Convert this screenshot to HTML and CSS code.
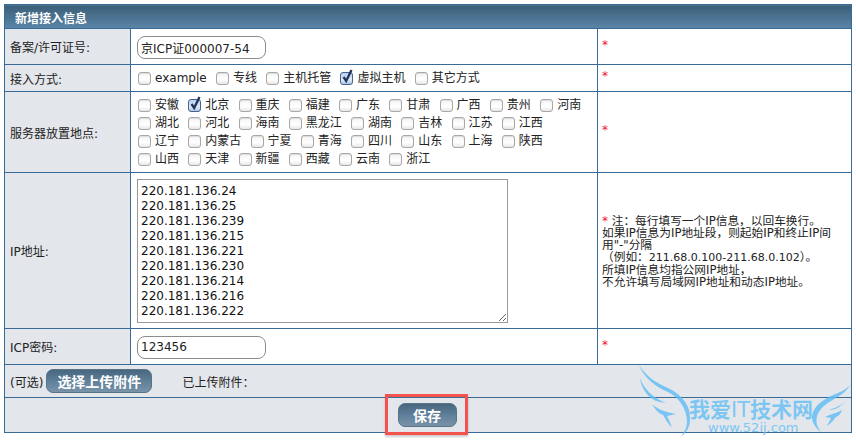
FILE: index.html
```html
<!DOCTYPE html>
<html lang="zh-CN">
<head>
<meta charset="utf-8">
<title>新增接入信息</title>
<link rel="stylesheet" href="styles.css">
</head>
<body>
<div class="page">
<table class="form">
  <colgroup><col class="c1"><col class="c2"><col class="c3"></colgroup>
  <tr class="r-head"><th colspan="3">新增接入信息</th></tr>
  <tr class="r-icp">
    <td class="label">备案/许可证号:</td>
    <td class="field"><input class="text" type="text" value="京ICP证000007-54"></td>
    <td class="note"><span class="req">*</span></td>
  </tr>
  <tr class="r-way">
    <td class="label">接入方式:</td>
    <td class="field"><div class="checks">
      <label class="ck"><input type="checkbox">example</label>
      <label class="ck"><input type="checkbox">专线</label>
      <label class="ck"><input type="checkbox">主机托管</label>
      <label class="ck"><input type="checkbox" checked>虚拟主机</label>
      <label class="ck"><input type="checkbox">其它方式</label>
    </div></td>
    <td class="note"><span class="req">*</span></td>
  </tr>
  <tr class="r-place">
    <td class="label">服务器放置地点:</td>
    <td class="field"><div class="checks">
      <label class="ck"><input type="checkbox">安徽</label>
      <label class="ck"><input type="checkbox" checked>北京</label>
      <label class="ck"><input type="checkbox">重庆</label>
      <label class="ck"><input type="checkbox">福建</label>
      <label class="ck"><input type="checkbox">广东</label>
      <label class="ck"><input type="checkbox">甘肃</label>
      <label class="ck"><input type="checkbox">广西</label>
      <label class="ck"><input type="checkbox">贵州</label>
      <label class="ck"><input type="checkbox">河南</label>
      <label class="ck"><input type="checkbox">湖北</label>
      <label class="ck"><input type="checkbox">河北</label>
      <label class="ck"><input type="checkbox">海南</label>
      <label class="ck"><input type="checkbox">黑龙江</label>
      <label class="ck"><input type="checkbox">湖南</label>
      <label class="ck"><input type="checkbox">吉林</label>
      <label class="ck"><input type="checkbox">江苏</label>
      <label class="ck"><input type="checkbox">江西</label>
      <label class="ck"><input type="checkbox">辽宁</label>
      <label class="ck"><input type="checkbox">内蒙古</label>
      <label class="ck"><input type="checkbox">宁夏</label>
      <label class="ck"><input type="checkbox">青海</label>
      <label class="ck"><input type="checkbox">四川</label>
      <label class="ck"><input type="checkbox">山东</label>
      <label class="ck"><input type="checkbox">上海</label>
      <label class="ck"><input type="checkbox">陕西</label>
      <label class="ck"><input type="checkbox">山西</label>
      <label class="ck"><input type="checkbox">天津</label>
      <label class="ck"><input type="checkbox">新疆</label>
      <label class="ck"><input type="checkbox">西藏</label>
      <label class="ck"><input type="checkbox">云南</label>
      <label class="ck"><input type="checkbox">浙江</label>
    </div></td>
    <td class="note"><span class="req">*</span></td>
  </tr>
  <tr class="r-ip">
    <td class="label">IP地址:</td>
    <td class="field"><textarea class="area">220.181.136.24
220.181.136.25
220.181.136.239
220.181.136.215
220.181.136.221
220.181.136.230
220.181.136.214
220.181.136.216
220.181.136.222</textarea></td>
    <td class="note small"><span class="req">*</span> 注：每行填写一个IP信息，以回车换行。<br>如果IP信息为IP地址段，则起始IP和终止IP间用"-"分隔<br>（例如：<span class="num">211.68.0.100-211.68.0.102</span>）。<br>所填IP信息均指公网IP地址，<br>不允许填写局域网IP地址和动态IP地址。</td>
  </tr>
  <tr class="r-pwd">
    <td class="label">ICP密码:</td>
    <td class="field"><input class="text" type="text" value="123456"></td>
    <td class="note"><span class="req">*</span></td>
  </tr>
  <tr class="r-upload">
    <td colspan="3" class="label"><div class="upload"><span>(可选)</span><button class="btn wide" type="button">选择上传附件</button><span class="done">已上传附件：</span></div></td>
  </tr>
  <tr class="r-save">
    <td colspan="3" class="label center"><button class="btn" type="button">保存</button></td>
  </tr>
</table>
<div class="mark"></div>
<svg class="wm" viewBox="0 0 226 82" width="226" height="82" aria-hidden="true">
  <g fill="#5cbcf5" fill-opacity=".8">
    <path d="M9 5C14 18 26 27 38 32C50 38 57 50 57 62C57 68 54 73 50 77C55 74 60 68 60 60C61 46 52 35 40 29C28 24 16 17 9 5Z"/>
    <path d="M10 18C14 30 24 38 36 43C29 42 25 41 21 38C15 33 11 26 10 18Z"/>
    <path d="M22 44C28 50 36 52 46 54L37 56L42 67C36 62 35 57 33 55C28 53 25 49 22 44Z"/>
    <path d="M221 24C214 36 203 38 194 46C186 53 183 63 192 73C184 67 180 60 183 52C187 42 200 36 208 33C214 30 218 28 221 24Z"/>
    <path d="M220 36C215 44 208 47 199 50C206 50 213 46 220 36Z"/>
    <path d="M212 50C207 53 201 54 195 57L201 58L197 66C202 63 204 59 206 57C209 56 211 53 212 50Z"/>
  </g>
  <text class="wm-cn" x="59" y="57">我爱<tspan class="wm-it">IT</tspan>技术网</text>
  <text class="wm-en" x="78" y="72">www.52ij.com</text>
</svg>
</div>
</body>
</html>
```
FILE: styles.css
```css
* { box-sizing: border-box; }
html, body { margin: 0; padding: 0; background: #fff; }
body {
  font-family: "DejaVu Sans", "Noto Sans CJK SC", sans-serif;
  font-size: 12px;
  color: #222;
}
.page { position: relative; width: 856px; height: 442px; padding: 4px 0 0 4px; overflow: hidden; }
.form { border-collapse: collapse; table-layout: fixed; width: 847px; }
.form th, .form td { border: 1px solid #3a6b97; padding: 0; }
.c1 { width: 126px; }
.c2 { width: 467px; }
.c3 { width: 254px; }
.r-head { height: 24px; }
.r-icp { height: 36px; }
.r-way { height: 27px; }
.r-place { height: 81px; }
.r-ip { height: 156px; }
.r-pwd { height: 36px; }
.r-upload { height: 33px; }
.r-save { height: 35px; }
.form th {
  background: linear-gradient(#3b5e77, #5a86a8);
  color: #fff;
  font-size: 12px;
  font-weight: bold;
  text-align: left;
  padding: 1px 0 0 10px;
}
.form .label { background: #e3e6eb; padding-left: 5px; }
.form .center { text-align: center; padding: 0 2px 0 0; }
.form .field { padding-left: 6px; background: #fff; }
.form .note { padding: 0 12px 4px 4px; background: #fff; }
.req { color: #f01030; font-size: 12px; }
.form .small { font-size: 11.7px; line-height: 12px; padding: 2px 12px 0 4px; }
.num { font-size: 11px; }
.text {
  display: block;
  width: 129px;
  height: 23px;
  margin-top: 1px;
  border: 1px solid #8c8c8c;
  border-radius: 8px;
  padding: 0 3px;
  font: 12px "DejaVu Sans", "Noto Sans CJK SC", sans-serif;
  color: #222;
  background: #fff;
}
.area {
  display: block;
  width: 371px;
  height: 144px;
  border: 1px solid #999;
  padding: 4px 3px 3px;
  font: 12px/15px "DejaVu Sans", "Noto Sans CJK SC", sans-serif;
  color: #111;
  background: #fff;
  overflow: hidden;
}
.checks { display: flex; flex-wrap: wrap; line-height: 18px; width: 460px; }
.ck { display: inline-flex; align-items: center; height: 18px; margin-right: 8.25px; }
.ck input {
  appearance: none;
  -webkit-appearance: none;
  position: relative;
  width: 13px;
  height: 13px;
  margin: 0 4px 0 1px;
  border: 1px solid #a8a8a8;
  border-radius: 3px;
  background: linear-gradient(#f4f4f4, #fff 60%, #e6e6e6);
  box-shadow: inset 0 1px 1px #ddd;
  flex: none;
}
.ck input:checked {
  border-color: #4a5f8a;
  background: linear-gradient(#b6d2f2, #dcebfb 60%, #a9c8ec);
  box-shadow: none;
}
.ck input:checked::after {
  content: "";
  position: absolute;
  left: 1px;
  top: -4px;
  width: 11px;
  height: 15px;
  background: url("data:image/svg+xml,%3Csvg xmlns='http://www.w3.org/2000/svg' viewBox='0 0 11 15'%3E%3Cpath d='M1.5 8L4.2 12L9.5 1' fill='none' stroke='%23223355' stroke-width='2.3'/%3E%3C/svg%3E") center/11px 15px no-repeat;
}
.upload { display: flex; align-items: center; }
.done { margin-left: 30px; }
.btn {
  height: 24px;
  width: 59px;
  border: 1px solid #5a7487;
  border-radius: 7px;
  background: linear-gradient(#47677f, #5f7f9a 50%, #7993a8);
  color: #fff;
  font: bold 14px "DejaVu Sans", "Noto Sans CJK SC", sans-serif;
  padding: 0;
}
.wide { width: 106px; margin-left: 3px; }
.mark {
  position: absolute;
  left: 385px;
  top: 394px;
  width: 83px;
  height: 41px;
  border: 3px solid #f4524f;
  box-shadow: 0 2px 2px rgba(0, 0, 0, .2);
}
.wm { position: absolute; left: 630px; top: 360px; pointer-events: none; }
.wm-cn { font: bold 21px "DejaVu Sans", "Noto Sans CJK SC", sans-serif; fill: #5cbcf5; fill-opacity: .75; }
.wm-it { font-weight: normal; }
.wm-en { font: 13px "DejaVu Sans", sans-serif; fill: #7cc6f5; }
```
